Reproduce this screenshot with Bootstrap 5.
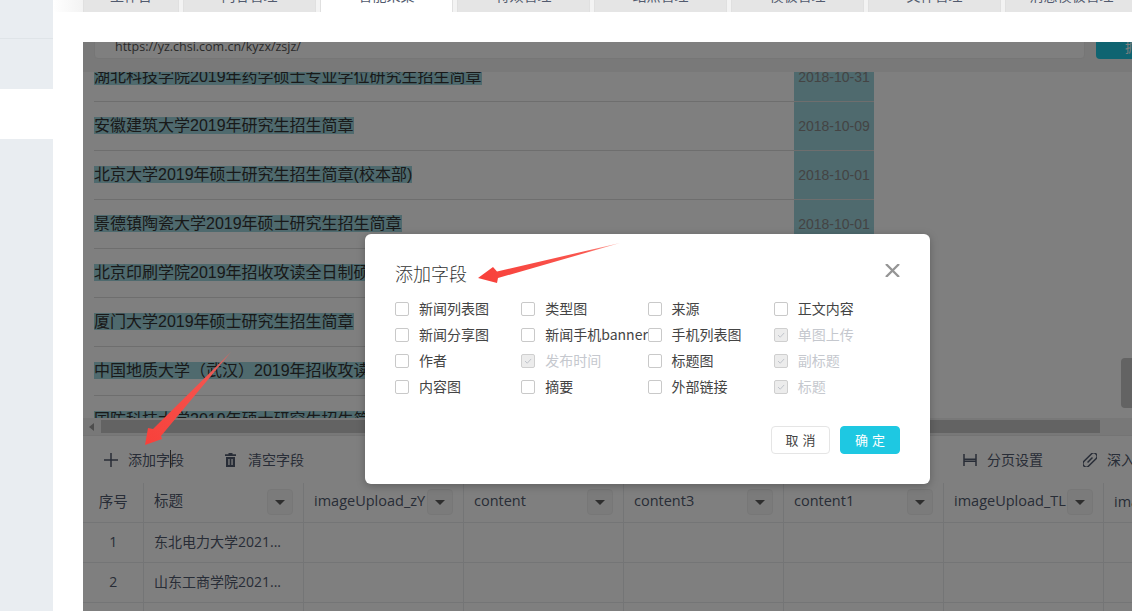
<!DOCTYPE html>
<html lang="zh-CN">
<head>
<meta charset="utf-8">
<title>添加字段</title>
<link href="https://cdn.jsdelivr.net/npm/bootstrap@5.3.0/dist/css/bootstrap.min.css" rel="stylesheet">
<style>
html,body{height:611px;overflow:hidden}
body{font-family:"Open Sans","Noto Sans CJK SC",sans-serif;font-size:14px;color:#515a6e;background:#fff;position:relative}
.side-rail{width:53px;flex:none;background:#e9edf1;position:relative}
.side-sep{height:39px;border-bottom:1px solid #dfe4e8}
.side-gap{height:50px}
.side-on{height:50px;background:#fff}
.work{min-width:0}
.tab-strip{height:12px;flex:none;overflow:hidden;padding-left:30px;gap:4px;background:linear-gradient(90deg,#fff,#f3f3f3 30px);align-items:flex-end}
.tab-item{flex:none;width:133px;height:35px;line-height:35px;text-align:center;background:#e5e5e5;border:1px solid #e0e0e0;border-bottom:0;color:#515a6e;font-size:14px}
.tab-item.first{width:96px}
.tab-item.now{background:#fff}
.white-gap{height:30px;flex:none}
.panel{margin-left:30px;min-height:0;overflow:hidden}
.url-band{height:30px;flex:none;background:#f2f2f2;overflow:hidden;padding-left:11px;gap:11px}
.url-box{width:991px;flex:none;height:24px;margin-top:-7px;background:#fff;border:1px solid #ececec;border-radius:4px;padding:0 20px;font-size:12.5px;color:#555;line-height:22px}
.url-btn{width:90px;flex:none;height:24px;margin-top:-7px;background:#1ec8e2;border-radius:4px;color:#fff;font-size:13px;padding-left:29px;line-height:24px;white-space:nowrap}
.news-wrap{height:346px;flex:none;overflow:hidden;padding-left:11px;font-family:"Liberation Sans","Noto Sans CJK SC",sans-serif}
.news-list{width:780px;margin-top:-19px}
.news-row{height:49px;border-bottom:1px solid #dcdcdc}
.news-title{font-size:16px;line-height:17px;color:#333;min-width:0;white-space:nowrap;padding-bottom:2px}
.news-title span{background:#9ed4dc}
.news-date{width:80px;flex:none;align-self:stretch;background:#9ed4dc;text-align:center;font-size:14px;color:#888;line-height:48px;white-space:nowrap}
.hbar{height:18px;flex:none;background:#f1f1f1;padding-top:2px;border-bottom:1px solid #e8e8e8}
.hbar-arrow{width:18px;flex:none;position:relative}
.hbar-arrow::before{content:"";position:absolute;left:6px;top:3px;border:4px solid transparent;border-right:5px solid #9a9a9a;border-left:0}
.hbar-thumb{width:999px;height:13px;flex:none;background:#c6c6c6}
.tool-bar{height:47px;flex:none;padding-left:21px;color:#515a6e;white-space:nowrap}
.tool-item{gap:10px;flex:none}
.tool-item svg{flex:none;display:block}
.ms-tool1{margin-left:41px}
.ms-tool2{margin-left:659px}
.ms-tool3{margin-left:40px}
.grid-wrap{min-height:0;overflow:hidden}
.field-grid{table-layout:fixed;width:1100px;margin:0;border-collapse:collapse;border-color:#e8eaec;--bs-table-color:#515a6e;--bs-table-bg:#fff}
.field-grid th,.field-grid td{height:40px;padding:0 0 1px 10.5px;font-weight:400;font-size:14px;vertical-align:middle;border:1px solid #e8eaec;white-space:nowrap;overflow:hidden;box-sizing:border-box}
.field-grid th{height:39px;border-top:0;padding-bottom:1px}
.field-grid th:first-child,.field-grid td:first-child{border-left:0}
.field-grid .num{text-align:center;padding-left:1px;padding-right:0}
.head-in{padding-right:10px}
.head-name{flex:1 1 0;min-width:0;overflow:hidden;font-size:14.5px;margin-top:-1px}
.head-drop{width:26px;height:26px;flex:none;background:#f7f7f7;border:1px solid #eeeeee;border-radius:4px;position:relative}
.head-drop::after{content:"";position:absolute;left:7px;top:10px;border:5px solid transparent;border-top:5px solid #5c5c5c;border-bottom:0}
.vbar-thumb{position:absolute;right:0;top:316px;width:11px;height:50px;background:#c6c6c6;border-radius:4px 0 0 4px}
.page-mask{position:absolute;inset:0;background:rgba(0,0,0,.5)}
.dlg{position:absolute;left:365px;top:234px;width:565px;height:250px;background:#fff;border:0;border-radius:6px;box-shadow:0 2px 8px rgba(0,0,0,.25);padding:0 30px;font-family:"Noto Sans CJK SC",sans-serif}
.dlg-head{height:62px;padding-top:26px}
.dlg-title{font-size:18px;line-height:26px;font-weight:300;color:#333;margin:0}
.dlg-x{position:absolute;right:30px;top:30px;width:15px;height:13px;padding:0;border:0;background:none;display:block}
.dlg-x svg{display:block}
.pick{height:26px;gap:10px;white-space:nowrap;font-size:14px;color:#444;margin:0;line-height:26px}
.pick-txt{margin-top:-3px}
.pick .form-check-input{width:14px;height:14px;margin:0;flex:none;border:1px solid #c9c9c9;border-radius:2px;background-color:#fff;opacity:1}
.pick .form-check-input:checked{background-color:#ececec;border-color:#cfcfcf;background-image:url("data:image/svg+xml,%3csvg xmlns='http://www.w3.org/2000/svg' viewBox='0 0 14 14'%3e%3cpath fill='none' stroke='%23b8bcc4' stroke-width='1' d='M3.5 7l2.6 2.6 4.6-5'/%3e%3c/svg%3e")}
.pick.off{color:#c5c8ce;opacity:1}
.dlg-foot{position:absolute;right:30px;top:192px;gap:10px}
.btn-plain,.btn-ok{width:59px;height:28px;padding:0;font-size:13px;line-height:26px;letter-spacing:4px;border-radius:4px;text-indent:4px;font-family:"Noto Sans CJK SC",sans-serif}
.btn-plain{background:#fff;border:1px solid #e5e5e5;color:#444}
.btn-ok{width:60px;background:#1ec8e2;border:1px solid #1ec8e2;color:#fff}
.marks{position:absolute;left:0;top:0;width:1132px;height:611px;pointer-events:none}
</style>
</head>
<body class="d-flex">
<aside class="side-rail">
  <div class="side-sep"></div>
  <div class="side-gap"></div>
  <div class="side-on"></div>
</aside>
<main class="work flex-grow-1 d-flex flex-column">
  <nav class="tab-strip d-flex">
    <div class="tab-item first">工作台</div>
    <div class="tab-item">内容管理</div>
    <div class="tab-item now">智能采集</div>
    <div class="tab-item">特效管理</div>
    <div class="tab-item">站点管理</div>
    <div class="tab-item">模板管理</div>
    <div class="tab-item">文件管理</div>
    <div class="tab-item">消息模板管理</div>
  </nav>
  <div class="white-gap"></div>
  <section class="panel flex-grow-1 d-flex flex-column position-relative">
    <div class="url-band d-flex">
      <div class="url-box">https://yz.chsi.com.cn/kyzx/zsjz/</div>
      <div class="url-btn">抓取</div>
    </div>
    <div class="news-wrap">
      <div class="news-list">
        <div class="news-row d-flex justify-content-between align-items-center"><div class="news-title"><span>湖北科技学院2019年药学硕士专业学位研究生招生简章</span></div><div class="news-date">2018-10-31</div></div>
        <div class="news-row d-flex justify-content-between align-items-center"><div class="news-title"><span>安徽建筑大学2019年研究生招生简章</span></div><div class="news-date">2018-10-09</div></div>
        <div class="news-row d-flex justify-content-between align-items-center"><div class="news-title"><span>北京大学2019年硕士研究生招生简章(校本部)</span></div><div class="news-date">2018-10-01</div></div>
        <div class="news-row d-flex justify-content-between align-items-center"><div class="news-title"><span>景德镇陶瓷大学2019年硕士研究生招生简章</span></div><div class="news-date">2018-10-01</div></div>
        <div class="news-row d-flex justify-content-between align-items-center"><div class="news-title"><span>北京印刷学院2019年招收攻读全日制硕士专业学位研究生招生简章</span></div><div class="news-date">2018-10-01</div></div>
        <div class="news-row d-flex justify-content-between align-items-center"><div class="news-title"><span>厦门大学2019年硕士研究生招生简章</span></div><div class="news-date">2018-09-30</div></div>
        <div class="news-row d-flex justify-content-between align-items-center"><div class="news-title"><span>中国地质大学（武汉）2019年招收攻读硕士学位研究生招生简章</span></div><div class="news-date">2018-09-30</div></div>
        <div class="news-row d-flex justify-content-between align-items-center"><div class="news-title"><span>国防科技大学2019年硕士研究生招生简章</span></div><div class="news-date">2018-09-30</div></div>
      </div>
    </div>
    <div class="hbar d-flex">
      <div class="hbar-arrow"></div>
      <div class="hbar-thumb"></div>
    </div>
    <div class="tool-bar d-flex align-items-center">
      <div class="tool-item d-flex align-items-center">
        <svg width="14" height="14" viewBox="0 0 14 14"><path d="M7 0v14M0 7h14" stroke="#515a6e" stroke-width="1.5" fill="none"/></svg>
        <span>添加字段</span>
      </div>
      <div class="tool-item d-flex align-items-center ms-tool1">
        <svg width="13" height="14" viewBox="0 0 13 14"><path d="M3.500 0h4v1.300h3.500V3H0V1.300h3.500zM1 4h9v10H1zM3.300 6v6h1.300V6zM6.400 6v6h1.300V6z" fill="#515a6e" fill-rule="evenodd"/></svg>
        <span>清空字段</span>
      </div>
      <div class="tool-item d-flex align-items-center ms-tool2">
        <svg width="14" height="14" viewBox="0 0 14 14"><path d="M1 1v12M13 1v12M1 6.300h12M1 8.200h12" stroke="#515a6e" stroke-width="1.500" fill="none"/></svg>
        <span>分页设置</span>
      </div>
      <div class="tool-item d-flex align-items-center ms-tool3">
        <svg width="14" height="14" viewBox="0 0 14 14"><g transform="rotate(-45 7 7)" fill="none" stroke="#515a6e" stroke-width="1.500"><rect x="-1.500" y="3.700" width="17" height="6.600" rx="3.300"/><path d="M3.500 7h7"/></g></svg>
        <span>深入</span>
      </div>
    </div>
    <div class="grid-wrap flex-grow-1">
      <table class="table field-grid">
        <colgroup><col style="width:60px"><col style="width:160px"><col style="width:160px"><col style="width:160px"><col style="width:160px"><col style="width:160px"><col style="width:160px"><col style="width:80px"></colgroup>
        <thead>
          <tr>
            <th class="num"><span class="head-name">序号</span></th>
            <th><div class="head-in d-flex align-items-center"><span class="head-name">标题</span><span class="head-drop"></span></div></th>
            <th><div class="head-in d-flex align-items-center"><span class="head-name">imageUpload_zY</span><span class="head-drop"></span></div></th>
            <th><div class="head-in d-flex align-items-center"><span class="head-name">content</span><span class="head-drop"></span></div></th>
            <th><div class="head-in d-flex align-items-center"><span class="head-name">content3</span><span class="head-drop"></span></div></th>
            <th><div class="head-in d-flex align-items-center"><span class="head-name">content1</span><span class="head-drop"></span></div></th>
            <th><div class="head-in d-flex align-items-center"><span class="head-name">imageUpload_TL</span><span class="head-drop"></span></div></th>
            <th><span class="head-name">imageUpload</span></th>
          </tr>
        </thead>
        <tbody>
          <tr><td class="num">1</td><td>东北电力大学2021...</td><td></td><td></td><td></td><td></td><td></td><td></td></tr>
          <tr><td class="num">2</td><td>山东工商学院2021...</td><td></td><td></td><td></td><td></td><td></td><td></td></tr>
          <tr><td class="num">3</td><td></td><td></td><td></td><td></td><td></td><td></td><td></td></tr>
        </tbody>
      </table>
    </div>
    <div class="vbar-thumb"></div>
    <div class="page-mask"></div>
  </section>
</main>

<div class="dlg" role="dialog" aria-label="添加字段">
  <div class="dlg-head"><h5 class="dlg-title">添加字段</h5></div>
  <button class="dlg-x" type="button" aria-label="关闭"><svg width="15" height="13" viewBox="0 0 15 13"><path d="M1 0l13 13M14 0L1 13" stroke="#959595" stroke-width="2.300" fill="none"/></svg></button>
  <div class="row g-0">
    <div class="col-3"><label class="pick d-flex align-items-center"><input class="form-check-input" type="checkbox"><span class="pick-txt">新闻列表图</span></label></div>
    <div class="col-3"><label class="pick d-flex align-items-center"><input class="form-check-input" type="checkbox"><span class="pick-txt">类型图</span></label></div>
    <div class="col-3"><label class="pick d-flex align-items-center"><input class="form-check-input" type="checkbox"><span class="pick-txt">来源</span></label></div>
    <div class="col-3"><label class="pick d-flex align-items-center"><input class="form-check-input" type="checkbox"><span class="pick-txt">正文内容</span></label></div>
    <div class="col-3"><label class="pick d-flex align-items-center"><input class="form-check-input" type="checkbox"><span class="pick-txt">新闻分享图</span></label></div>
    <div class="col-3"><label class="pick d-flex align-items-center"><input class="form-check-input" type="checkbox"><span class="pick-txt">新闻手机banner</span></label></div>
    <div class="col-3"><label class="pick d-flex align-items-center"><input class="form-check-input" type="checkbox"><span class="pick-txt">手机列表图</span></label></div>
    <div class="col-3"><label class="pick off d-flex align-items-center"><input class="form-check-input" type="checkbox" checked disabled><span class="pick-txt">单图上传</span></label></div>
    <div class="col-3"><label class="pick d-flex align-items-center"><input class="form-check-input" type="checkbox"><span class="pick-txt">作者</span></label></div>
    <div class="col-3"><label class="pick off d-flex align-items-center"><input class="form-check-input" type="checkbox" checked disabled><span class="pick-txt">发布时间</span></label></div>
    <div class="col-3"><label class="pick d-flex align-items-center"><input class="form-check-input" type="checkbox"><span class="pick-txt">标题图</span></label></div>
    <div class="col-3"><label class="pick off d-flex align-items-center"><input class="form-check-input" type="checkbox" checked disabled><span class="pick-txt">副标题</span></label></div>
    <div class="col-3"><label class="pick d-flex align-items-center"><input class="form-check-input" type="checkbox"><span class="pick-txt">内容图</span></label></div>
    <div class="col-3"><label class="pick d-flex align-items-center"><input class="form-check-input" type="checkbox"><span class="pick-txt">摘要</span></label></div>
    <div class="col-3"><label class="pick d-flex align-items-center"><input class="form-check-input" type="checkbox"><span class="pick-txt">外部链接</span></label></div>
    <div class="col-3"><label class="pick off d-flex align-items-center"><input class="form-check-input" type="checkbox" checked disabled><span class="pick-txt">标题</span></label></div>
  </div>
  <div class="dlg-foot d-flex">
    <button class="btn btn-plain" type="button">取消</button>
    <button class="btn btn-ok" type="button">确定</button>
  </div>
</div>

<svg class="marks" viewBox="0 0 1132 611" aria-hidden="true">
  <defs>
    <linearGradient id="g1" x1="620" y1="243" x2="478" y2="278" gradientUnits="userSpaceOnUse"><stop offset="0" stop-color="#ffb0a8"/><stop offset=".25" stop-color="#f9574f"/><stop offset="1" stop-color="#f8403a"/></linearGradient>
    <linearGradient id="g2" x1="231" y1="353" x2="144" y2="445" gradientUnits="userSpaceOnUse"><stop offset="0" stop-color="#c96a66"/><stop offset=".3" stop-color="#f4534d"/><stop offset="1" stop-color="#f8403a"/></linearGradient>
  </defs>
  <polygon points="620,243 497,271.500 493,267 478,278 497,283 498,278" fill="url(#g1)"/>
  <polygon points="231,352 153,429 148,428 145,445 162,439 161,436" fill="url(#g2)"/>
  <line x1="170.500" y1="450" x2="170.500" y2="468" stroke="#222" stroke-width="1"/>
</svg>
</body>
</html>
